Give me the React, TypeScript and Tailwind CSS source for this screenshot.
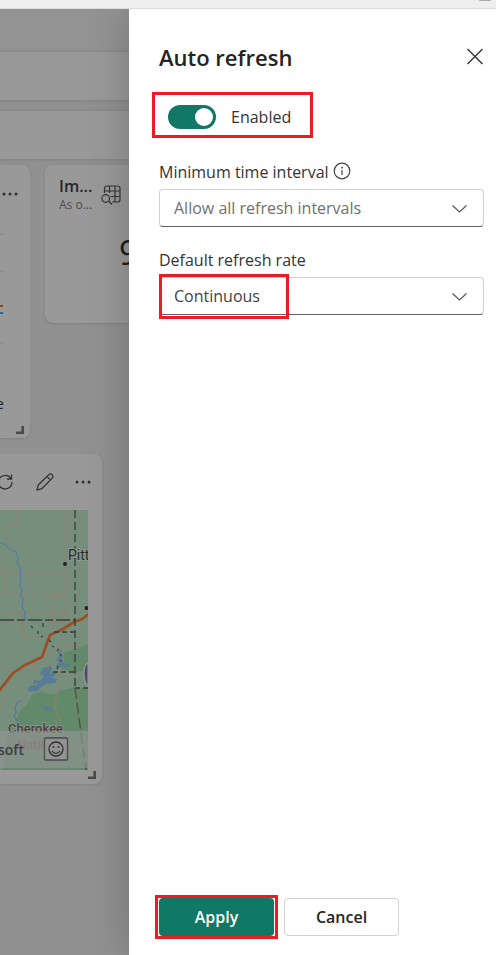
import { useState } from "react";
import type { ReactNode } from "react";

function Dots() {
  return (
    <svg width="16" height="4" viewBox="0 0 16 4" fill="#2f2f2f" aria-hidden="true">
      <circle cx="2" cy="2" r="1.5" />
      <circle cx="8" cy="2" r="1.5" />
      <circle cx="14" cy="2" r="1.5" />
    </svg>
  );
}

function ResizeCorner() {
  return (
    <svg width="8" height="8" viewBox="0 0 8 8" fill="none" stroke="#484848" strokeWidth="2.500" aria-hidden="true">
      <path d="M6.700 0v6.700H0" />
    </svg>
  );
}

function TableSearchIcon() {
  return (
    <svg width="20" height="20" viewBox="0 0 20 20" fill="none" stroke="#353535" strokeWidth="1.2" aria-hidden="true">
      <path d="M3.500 8V3.500A2.500 2.500 0 0 1 6 1h10.500A2.500 2.500 0 0 1 19 3.500v11a2.500 2.500 0 0 1-2.500 2.500H11M3.500 6H19M9.500 11.500H19M8.500 1v7M14 1v16" />
      <circle cx="4.700" cy="13.500" r="3.800" />
      <path d="M7.500 16l3.500 3.500" />
    </svg>
  );
}

function RefreshIcon() {
  return (
    <svg width="20" height="20" viewBox="0 0 20 20" fill="none" stroke="#353535" strokeWidth="1.300" aria-hidden="true">
      <path d="M3.500 8.500A7 7 0 0 1 16 6.500M16.500 2.500V7H12M17 10a7 7 0 0 1-13 3.500" />
    </svg>
  );
}

function PencilIcon() {
  return (
    <svg width="18" height="18" viewBox="0 0 18 18" fill="none" stroke="#353535" strokeWidth="1.300" strokeLinejoin="round" aria-hidden="true">
      <path d="M1 17l1.200-5L12.800 1.700a2.300 2.300 0 0 1 3.400 0a2.300 2.300 0 0 1 0 3.400L5.800 15.700zM11 3.500l3.400 3.400" />
    </svg>
  );
}

function Chevron() {
  return (
    <svg className="pointer-events-none absolute right-4 top-4" width="16" height="8" viewBox="0 0 16 8" fill="none" stroke="#555" strokeWidth="1.200" aria-hidden="true">
      <path d="M0.500 0.500l7 6.500l7-6.500" />
    </svg>
  );
}

function MapTile() {
  return (
    <svg className="block" width="88" height="260" viewBox="0 0 88 260" role="img" aria-label="Map">
      <rect width="88" height="260" fill="#758f7c" />
      <path d="M88 134l-10 4l-9 3l-6 2l1 8l-3 8l14 4l13-4zM88 178H75l-3-4l-12 2l-3 8l-10 0l-6-3l-9 4l-4 8l-9 9l-2 8l-9 12l-5 38H88z" fill="#63896b" />
      <path d="M58 165l16-3l3 10l-5 6l-13 3z" fill="#758f7c" />
      <g fill="none" stroke="#997d6e" strokeWidth="1">
        <path d="M16 0v16H6L5 60v24M0 60h7l8 4h51M66 0v97l-4 12l-5 9M0 84h24l8-1l34 2M52 85v34M24 87l-2 40h22M0 103h66M62 98l6 9l6 3M88 133l-18 1l-5 3l-10 3l-12 7M0 157l10 5l15-1l10-1v-8M13 163l-7 15l-3 14l-3 7M43 152l10 4l6 6v18l-5 14l5 15M55 209l4 10" />
      </g>
      <path d="M0 33l6 2l3 4l7 3l2 6l-1 5l3 4l1 11l-1 8l2 5l-2 4l3 4l-1 8l3 5l-1 4l3 4" fill="none" stroke="#5d7ca0" strokeWidth="1.300" />
      <path d="M43 158l8-2l1 3l-2 5l6-4l0 4l-4 4l5 1l-2 4l-9 1l-6 4l-3 3l-9 1l2-4l6-1l2-4l-5 1l1-4l6 1l4-5l-4-2zM40 195l8 2l5 3l-2 2l-6-2zM58 142l4-2l-1 4l2 3l-2 3l3 3l6 1l-1 3l-7-1l-5 3l-1-3l3-4l-3-2l3-3zM27 178l6-3l6 1l-2 3l-7 2z" fill="#587c98" />
      <path d="M20 191l-3 2l-2 5l1 5l-2 4l4 5" fill="none" stroke="#587c98" strokeWidth="1.500" />
      <path d="M-1 181L13 163L25 155L42 147L50 125L63 119L74 112L82 109L89 104" fill="none" stroke="#9c4e22" strokeWidth="2.700" strokeLinejoin="round" />
      <g fill="none" stroke="#403a35" strokeWidth="1.300">
        <path d="M75 0V178" strokeDasharray="8 4" />
        <path d="M0 110h75" strokeDasharray="14 3 8 3" />
        <path d="M54 122h21M53 162h22M75 178h13" strokeDasharray="5 3" />
        <path d="M75 178l11 82" stroke="#5b4a42" strokeDasharray="11 4" />
        <path d="M31 116l2 2M38 121l0 3M41 127l2-1M43 113v4M49 130l2 2M52 136l2 1M57 141l2-2M61 144v2M62 150l-2 1M58 156l-1 3" />
      </g>
      <path d="M88 153a4 11 0 0 0 0 22z" fill="#4e4a72" stroke="#a5a5a5" />
      <circle cx="65" cy="54" r="2" fill="#252525" />
      <circle cx="86.500" cy="98" r="2" fill="#252525" />
      <g fontFamily="Roboto, 'Liberation Sans', sans-serif">
        <text x="68" y="50" fontSize="14" fill="#292929" stroke="#8b998e" strokeWidth="2" paintOrder="stroke">Pitt</text>
        <text x="8" y="223" fontSize="13" fontWeight="500" fill="#553b3b" stroke="#81978a" strokeWidth="2" paintOrder="stroke">Cherokee</text>
        <text x="17" y="239" fontSize="13" fontWeight="500" fill="#7f5560">Nation</text>
      </g>
      <path d="M0 221h88v37H0z" fill="#939393" fillOpacity="0.650" />
      <text x="-2" y="245" fontSize="14" fontWeight="600" fill="#3c3c3c" fontFamily="'Open Sans', sans-serif">soft</text>
      <g fill="none" stroke="#303030">
        <rect x="44.500" y="228" width="23" height="22" rx="1" strokeWidth="1.300" stroke="#4b4b4b" fill="#939393" />
        <circle cx="56" cy="239" r="7" strokeWidth="1.300" />
        <path d="M52 241a4.500 4.500 0 0 0 8 0" strokeWidth="1.200" />
      </g>
      <circle cx="53.500" cy="237" r="1" fill="#303030" />
      <circle cx="58.500" cy="237" r="1" fill="#303030" />
    </svg>
  );
}

function Dashboard() {
  return (
    <main className="flex w-[129px] shrink-0 flex-col overflow-hidden bg-[#919191]">
      <div className="h-[42px] bg-[#939393]" />
      <div className="h-[49px] border-t border-[#8b8b8b] bg-[#999999] shadow-[0_1px_3px_#808080]" />
      <div className="mt-[10px] h-[49px] border-t border-[#898989] bg-[#999999] shadow-[0_1px_3px_#808080]" />
      <div className="mt-[6px] flex items-start gap-[15px]">
        <section className="flex h-[273px] w-[30px] shrink-0 flex-col rounded-r-lg bg-[#999999] shadow-[0_1px_3px_#808080]">
          <button type="button" aria-label="More options" className="ml-[2px] mt-[27px]"><Dots /></button>
          <svg className="mt-[34px]" width="4" height="116" viewBox="0 0 4 116" aria-hidden="true">
            <path d="M0 4h4M0 41h4" stroke="#858585" />
            <path d="M0 76h3" stroke="#94420f" strokeWidth="2" />
            <path d="M0 83h3" stroke="#2c6592" strokeWidth="2" />
            <path d="M0 113h4" stroke="#8793a3" strokeWidth="2" />
          </svg>
          <span className="-ml-1 mt-[49px] text-[14px] leading-[18px] text-[#222]">e</span>
          <div className="mb-1 ml-4 mt-auto"><ResizeCorner /></div>
        </section>
        <section className="h-[158px] w-[160px] shrink-0 rounded-lg bg-[#999999] pl-[14px] pt-[11px] shadow-[0_1px_3px_#808080]">
          <div className="flex gap-2">
            <div className="w-[34px]">
              <h2 className="text-[16px] font-semibold leading-[20px] text-[#262626]">Im...</h2>
              <p className="text-[12px] leading-[18px] text-[#4b4b4b]">As o...</p>
            </div>
            <div className="pt-[9px]"><TableSearchIcon /></div>
          </div>
          <p className="ml-[60px] mt-4 text-[34px] leading-[44px] text-[#1d1d1d]">98</p>
        </section>
      </div>
      <section className="mt-4 flex h-[330px] w-[102px] flex-col rounded-r-lg bg-[#999999] shadow-[0_1px_3px_#808080]">
        <div className="flex h-14 items-center">
          <button type="button" aria-label="Refresh" className="-ml-[5px]"><RefreshIcon /></button>
          <button type="button" aria-label="Edit" className="ml-[21px]"><PencilIcon /></button>
          <button type="button" aria-label="More options" className="ml-[21px]"><Dots /></button>
        </div>
        <MapTile />
        <div className="ml-[88px] mt-px"><ResizeCorner /></div>
      </section>
    </main>
  );
}

type SelectFieldProps = {
  id: string;
  label: string;
  options: string[];
  icon?: ReactNode;
  muted?: boolean;
  highlighted?: boolean;
};

function SelectField({ id, label, options, icon, muted, highlighted }: SelectFieldProps) {
  return (
    <div>
      <div className="flex h-[28px] items-start gap-1">
        <label htmlFor={id} className="text-[16px] leading-[22px] text-[#333]">{label}</label>
        {icon}
      </div>
      <div className="relative">
        <select
          id={id}
          className={`block h-[38px] w-full appearance-none rounded border border-[#d1d1d1] border-b-[#616161] bg-white px-[14px] text-[16px] ${muted ? "text-[#707070]" : "text-[#424242]"}`}
        >
          {options.map((option) => (
            <option key={option}>{option}</option>
          ))}
        </select>
        <Chevron />
        {highlighted && <span className="pointer-events-none absolute -top-[3px] left-0 h-[45px] w-[130px] border-[3px] border-[#ed1c24]" />}
      </div>
    </div>
  );
}

function InfoIcon() {
  return (
    <svg className="mt-px" width="18" height="18" viewBox="0 0 18 18" fill="none" stroke="#424242" strokeWidth="1.200" aria-hidden="true">
      <circle cx="9" cy="9" r="7.800" />
      <path d="M9 8v5" />
      <circle cx="9" cy="5.700" r="0.900" fill="#424242" stroke="none" />
    </svg>
  );
}

export default function App() {
  const [enabled, setEnabled] = useState(true);
  return (
    <div className="flex min-h-screen flex-col bg-white font-['Open_Sans','Noto_Sans',sans-serif]">
      <header className="flex h-[9px] justify-end border-b border-[#dcdcdc] bg-[#eeeeee] pr-[5px]">
        <span className="h-px w-3 rounded-b-full bg-[#aaaaaa]" />
      </header>
      <div className="flex flex-1">
        <Dashboard />
        <aside className="relative flex min-w-0 flex-1 flex-col bg-white pb-[19px] pl-[30px] pr-3 shadow-[0_0_40px_rgba(0,0,0,0.22)] [clip-path:inset(0_0_0_-90px)]">
          <div className="mt-8 flex items-center justify-between">
            <h1 className="text-[22px] font-semibold leading-[32px] text-[#242424]">Auto refresh</h1>
            <button type="button" aria-label="Close">
              <svg width="18" height="18" viewBox="0 0 18 18" fill="none" stroke="#3b3b3b" strokeWidth="1.500" aria-hidden="true">
                <path d="M1.500 1l15 15M16.500 1l-15 15" />
              </svg>
            </button>
          </div>
          <label className="-ml-[7px] mt-[19px] flex h-[46px] w-[161px] cursor-pointer items-center gap-[15px] border-[3px] border-[#ed1c24] pl-[13px] pt-1">
            <input type="checkbox" role="switch" checked={enabled} onChange={(event) => setEnabled(event.target.checked)} className="peer sr-only" />
            <span className="flex h-6 w-12 items-center rounded-full bg-[#8a8a8a] px-[3px] peer-checked:justify-end peer-checked:bg-[#117865]">
              <span className="size-[18px] rounded-full bg-white" />
            </span>
            <span className="text-[16px] leading-[24px] text-[#333]">Enabled</span>
          </label>
          <div className="mt-[23px] flex flex-col gap-[22px]">
            <SelectField id="minimum-interval" label="Minimum time interval" options={["Allow all refresh intervals"]} icon={<InfoIcon />} muted />
            <SelectField id="default-rate" label="Default refresh rate" options={["Continuous"]} highlighted />
          </div>
          <div className="mt-auto flex gap-[10px]">
            <button type="button" className="relative h-[38px] w-[115px] rounded bg-[#117865] text-[16px] font-semibold text-white">
              Apply
              <span className="pointer-events-none absolute -inset-x-1 -inset-y-[3px] border-[3px] border-[#ed1c24]" />
            </button>
            <button type="button" className="h-[38px] w-[115px] rounded border border-[#d1d1d1] bg-white text-[16px] font-semibold text-[#242424]">Cancel</button>
          </div>
        </aside>
      </div>
    </div>
  );
}
